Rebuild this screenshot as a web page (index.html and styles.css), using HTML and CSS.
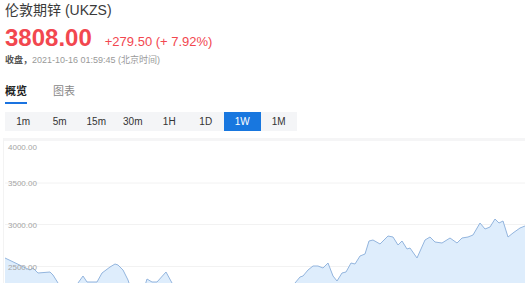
FILE: index.html
```html
<!DOCTYPE html>
<html lang="zh-CN">
<head>
    <meta charset="UTF-8">
    <title>伦敦期锌 (UKZS)</title>
    <link rel="stylesheet" href="styles.css">
</head>
<body>
    <div class="quote">
        <h1 class="title">伦敦期锌 (UKZS)</h1>

        <div class="price-row">
            <span class="price">3808.00</span>
            <span class="change">+279.50 (+ 7.92%)</span>
        </div>

        <div class="close-time">
            <b>收盘，</b>2021-10-16 01:59:45 (北京时间)
        </div>

        <div class="tabs">
            <span class="tab active">概览</span>
            <span class="tab">图表</span>
        </div>

        <div class="periods">
            <span class="period">1m</span>
            <span class="period">5m</span>
            <span class="period">15m</span>
            <span class="period">30m</span>
            <span class="period">1H</span>
            <span class="period">1D</span>
            <span class="period active">1W</span>
            <span class="period">1M</span>
        </div>

        <div class="chart">
            <svg class="chart-svg" viewBox="5 138 520 145" width="520" height="145">
                <!-- grid -->
                <line class="grid" x1="5" y1="183" x2="525" y2="183"/>
                <line class="grid" x1="5" y1="224.5" x2="525" y2="224.5"/>
                <line class="grid" x1="5" y1="266.5" x2="525" y2="266.5"/>

                <path class="area" d="M5,258 L30,270 L33,268 L38,273 L50,272 L53,275 L58,283 L62,292 L74,292 L78,283 L83,276 L87,282 L97,282 L102,273 L110,267 L115,264 L118,265 L123,270 L128,280 L132,292 L143,292 L147,279 L152,282 L157,282 L166,272 L172,283 L176,292 L290,292 L295,283 L300,277 L303,276 L308,270 L313,266 L318,266 L323,268 L328,263 L333,276 L337,281 L342,273 L346,272 L351,263 L355,264 L360,256 L365,254 L369,241 L373,240 L380,244 L388,236 L393,237 L398,245 L402,241 L407,249 L410,248 L417,258 L425,240 L430,237 L435,242 L442,243 L450,238 L457,243 L462,238 L468,237 L473,235 L480,223 L485,229 L490,227 L495,219 L499,223 L503,221 L508,237 L513,233 L520,228 L525,226 L525,300 L5,300 Z"/>
                <path class="line" d="M5,258 L30,270 L33,268 L38,273 L50,272 L53,275 L58,283 L62,292 M74,292 L78,283 L83,276 L87,282 L97,282 L102,273 L110,267 L115,264 L118,265 L123,270 L128,280 L132,292 M143,292 L147,279 L152,282 L157,282 L166,272 L172,283 L176,292 M290,292 L295,283 L300,277 L303,276 L308,270 L313,266 L318,266 L323,268 L328,263 L333,276 L337,281 L342,273 L346,272 L351,263 L355,264 L360,256 L365,254 L369,241 L373,240 L380,244 L388,236 L393,237 L398,245 L402,241 L407,249 L410,248 L417,258 L425,240 L430,237 L435,242 L442,243 L450,238 L457,243 L462,238 L468,237 L473,235 L480,223 L485,229 L490,227 L495,219 L499,223 L503,221 L508,237 L513,233 L520,228 L525,226"/>

                <text class="axis" x="8" y="150">4000.00</text>
                <text class="axis" x="8" y="186">3500.00</text>
                <text class="axis" x="8" y="227.5">3000.00</text>
                <text class="axis" x="8" y="269.5">2500.00</text>
            </svg>
        </div>
    </div>
</body>
</html>
```

FILE: styles.css
```css
html, body {
    margin: 0;
    padding: 0;
    background: #fff;
    overflow: hidden;
}
body {
    font-family: "Liberation Sans", Arial, "Noto Sans CJK SC", sans-serif;
    color: #333;
}
.quote {
    padding: 0 0 0 5px;
}
.title {
    margin: 0;
    font-size: 14px;
    font-weight: normal;
    line-height: 20px;
    color: #3a3a3a;
}
.price-row {
    display: flex;
    align-items: baseline;
    gap: 13px;
    margin-top: 6px;
    height: 24px;
}
.price {
    font-size: 24px;
    font-weight: bold;
    line-height: 24px;
    color: #f2474f;
}
.change {
    font-size: 13px;
    color: #f2474f;
}
.close-time {
    margin-top: 4px;
    font-size: 9px;
    line-height: 12px;
    color: #999;
}
.close-time b {
    color: #555;
}
.tabs {
    display: flex;
    gap: 26px;
    margin-top: 18px;
}
.tab {
    font-size: 11px;
    line-height: 14px;
    padding-bottom: 4px;
    color: #888;
    border-bottom: 2px solid transparent;
}
.tab.active {
    color: #222;
    font-weight: bold;
    border-bottom-color: #1a73e0;
}
.periods {
    display: flex;
    width: 292px;
    margin-top: 8px;
    background: #f4f5f7;
}
.period {
    width: 36.5px;
    height: 19px;
    line-height: 19px;
    text-align: center;
    font-size: 10px;
    color: #333;
}
.period.active {
    background: #1877df;
    color: #fff;
}
.chart {
    margin-top: 7px;
    height: 145px;
    border-top: 3px solid #f5f5f6;
    border-left: 1px solid #f3f3f3;
    margin-left: -2px;
    overflow: hidden;
}
.chart-svg {
    display: block;
    margin-top: -3px;
    margin-left: 1px;
}
.grid {
    stroke: #f2f2f2;
    stroke-width: 1;
}
.area {
    fill: #deedfc;
}
.line {
    fill: none;
    stroke: #93b5de;
    stroke-width: 1;
    stroke-linejoin: round;
}
.axis {
    font-family: "Liberation Sans", Arial, sans-serif;
    font-size: 8px;
    fill: #a5a5a5;
}
```
